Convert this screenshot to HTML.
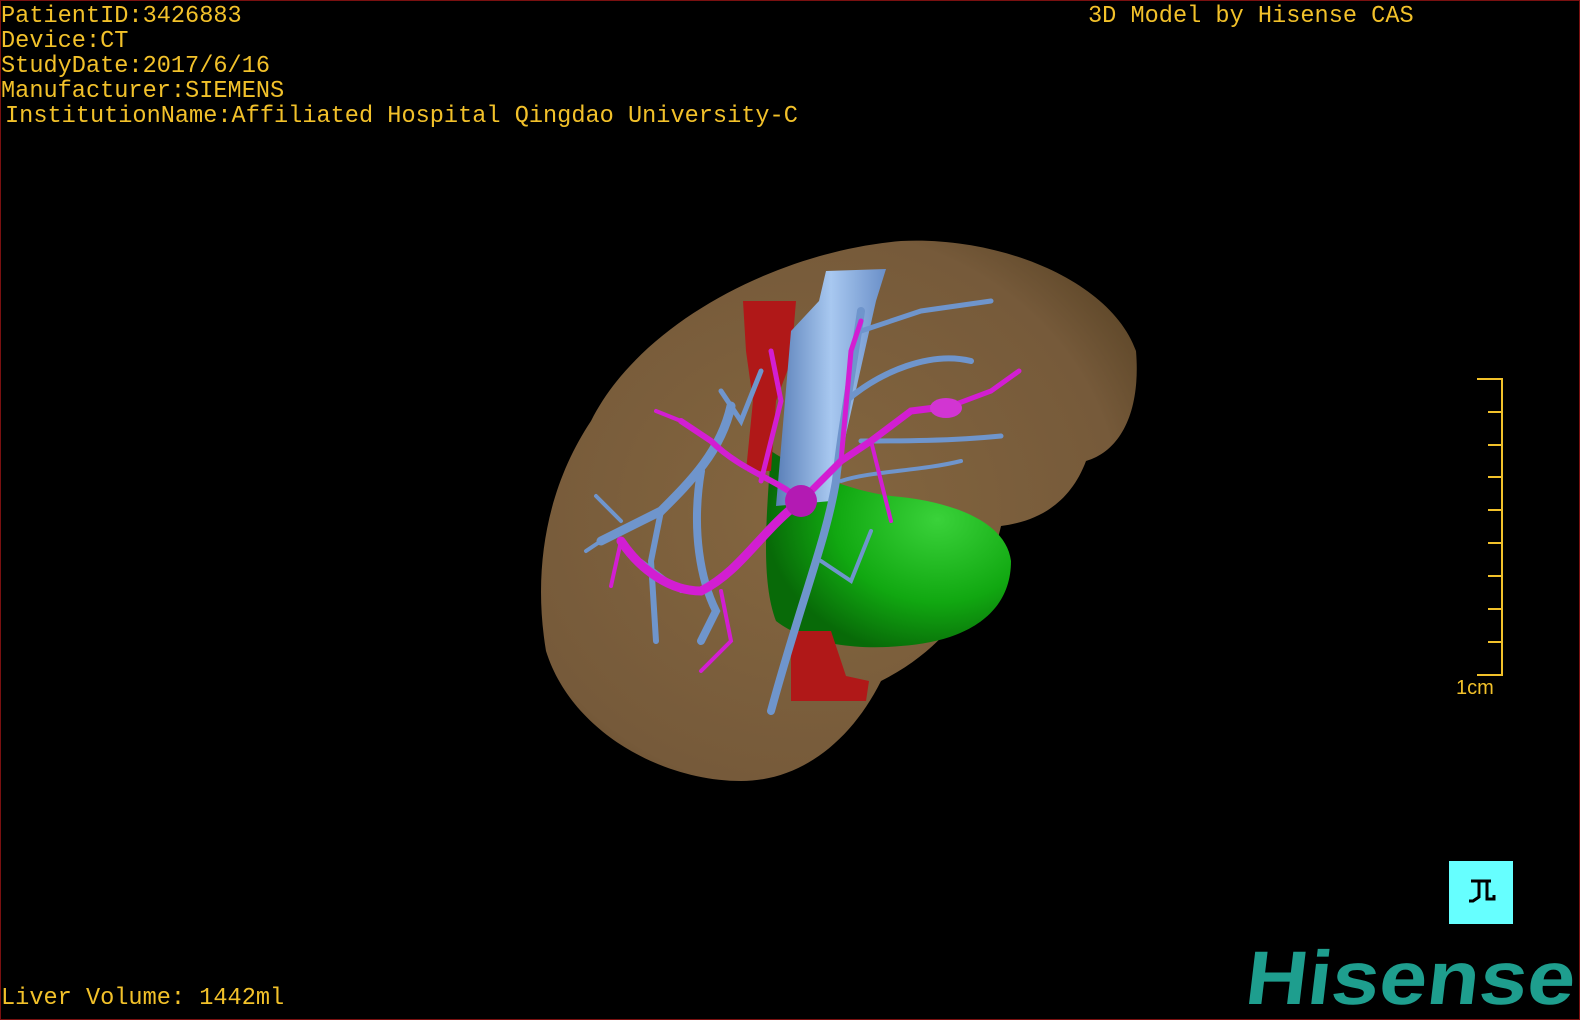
<!DOCTYPE html>
<html><head><meta charset="utf-8"><style>
html,body{margin:0;padding:0;background:#000;}
#v{position:relative;width:1580px;height:1020px;background:#000;overflow:hidden;box-sizing:border-box;border:1px solid #7a1010;}
.t{position:absolute;font-family:"Liberation Mono",monospace;font-size:23.6px;color:#f2c12a;line-height:25px;white-space:pre;}
</style></head><body><div id="v">
<svg width="1580" height="1020" style="position:absolute;left:0;top:0">
<defs>
<radialGradient id="lv" cx="0.45" cy="0.5" r="0.65"><stop offset="0" stop-color="#84663f"/><stop offset="0.8" stop-color="#765a3a"/><stop offset="1" stop-color="#5e4729"/></radialGradient>
<radialGradient id="gr" cx="0.7" cy="0.35" r="0.7"><stop offset="0" stop-color="#3ad23a"/><stop offset="0.6" stop-color="#11a811"/><stop offset="1" stop-color="#086a08"/></radialGradient>
<linearGradient id="ivc" x1="0" x2="1"><stop offset="0" stop-color="#5a7fb8"/><stop offset="0.5" stop-color="#a8c8f0"/><stop offset="1" stop-color="#6a8fc8"/></linearGradient>
</defs>
<path d="M590 420 C640 320 780 250 900 240 C1000 235 1110 280 1135 350 C1140 410 1120 450 1085 460 C1070 500 1040 520 1000 525 C990 570 960 640 880 680 C850 740 800 780 740 780 C660 780 570 730 545 650 C530 560 550 480 590 420 Z" fill="url(#lv)"/>
<path d="M770 450 C800 470 850 490 890 495 C950 500 1005 520 1010 560 C1010 610 970 640 900 645 C850 650 800 640 775 620 C760 580 765 520 770 450 Z" fill="url(#gr)"/>
<g fill="#b01818"><path d="M742 300 L795 300 L790 360 L775 400 L770 470 L745 470 L752 400 L745 350 Z"/><path d="M790 630 L830 630 L845 675 L868 680 L865 700 L790 700 Z"/></g>
<path d="M818 300 L825 270 L885 268 L875 300 L830 500 L775 505 L790 330 Z" fill="url(#ivc)"/>
<g stroke="#6f95cc" stroke-linecap="round" fill="none">
<path d="M730 405 C720 450 690 480 660 510 L600 540" stroke-width="9"/>
<path d="M700 470 C690 530 700 580 715 610 L700 640" stroke-width="8"/>
<path d="M660 510 L650 560 L655 640" stroke-width="6"/>
<path d="M860 310 C850 380 840 430 835 480 C825 540 800 600 770 710" stroke-width="8"/>
<path d="M860 330 L920 310 L990 300" stroke-width="5"/>
<path d="M845 400 C880 370 930 350 970 360" stroke-width="6"/>
<path d="M860 440 C900 440 950 440 1000 435" stroke-width="5"/>
<path d="M840 480 C870 470 920 470 960 460" stroke-width="4"/>
<path d="M820 560 L850 580 L870 530" stroke-width="4"/>
<path d="M760 370 L740 420 L720 390" stroke-width="5"/>
<path d="M600 540 L585 550 M620 520 L595 495 M680 590 L640 560" stroke-width="4"/>
</g>
<g stroke="#d21ed2" stroke-linecap="round" fill="none">
<path d="M800 500 C760 530 740 570 700 590 C670 590 640 570 620 540" stroke-width="9"/>
<path d="M800 500 C780 480 740 470 710 440 L680 420" stroke-width="6"/>
<path d="M800 500 L840 460 L870 440 L910 410 L950 405" stroke-width="7"/>
<path d="M950 405 L990 390 L1018 370" stroke-width="5"/>
<path d="M840 460 L850 350 L860 320" stroke-width="5"/>
<path d="M760 480 L780 400 L770 350" stroke-width="5"/>
<path d="M720 590 L730 640 L700 670" stroke-width="4"/>
<path d="M620 540 L610 585 M680 420 L655 410 M870 440 L890 520" stroke-width="4"/>
</g>
<circle cx="800" cy="500" r="16" fill="#b31ab3"/><ellipse cx="945" cy="407" rx="16" ry="10" fill="#d235d2"/>
<g stroke="#f2c12a" stroke-width="2" fill="none">
<path d="M1476 378 H1501 V674 H1476"/>
<path d="M1487 411 H1501 M1487 444 H1501 M1487 476 H1501 M1487 509 H1501 M1487 542 H1501 M1487 575 H1501 M1487 608 H1501 M1487 641 H1501"/>
</g>
</svg>
<div class="t" style="left:0;top:3px">PatientID:3426883
Device:CT
StudyDate:2017/6/16
Manufacturer:SIEMENS</div>
<div class="t" style="left:4px;top:103px">InstitutionName:Affiliated Hospital Qingdao University-C</div>
<div class="t" style="left:1087px;top:3px">3D Model by Hisense CAS</div>
<div class="t" style="left:1455px;top:675px;font-family:'Liberation Sans',sans-serif;font-size:20px">1cm</div>
<div class="t" style="left:0;top:985px">Liver Volume: 1442ml</div>
<div style="position:absolute;left:1448px;top:860px;width:64px;height:63px;background:#66ffff;"><svg width="64" height="63"><path d="M22 20 H42 M30 20 V36 L24 40 H20 M38 20 V38 H45 V34" stroke="#000" stroke-width="3" fill="none"/></svg></div>
<div style="position:absolute;left:1250px;top:938px;font-family:'Liberation Sans',sans-serif;font-weight:bold;font-size:76px;color:#1e9e8e;line-height:80px;transform:scaleX(1.13) skewX(-6deg);transform-origin:left top">Hisense</div>
</div></body></html>
